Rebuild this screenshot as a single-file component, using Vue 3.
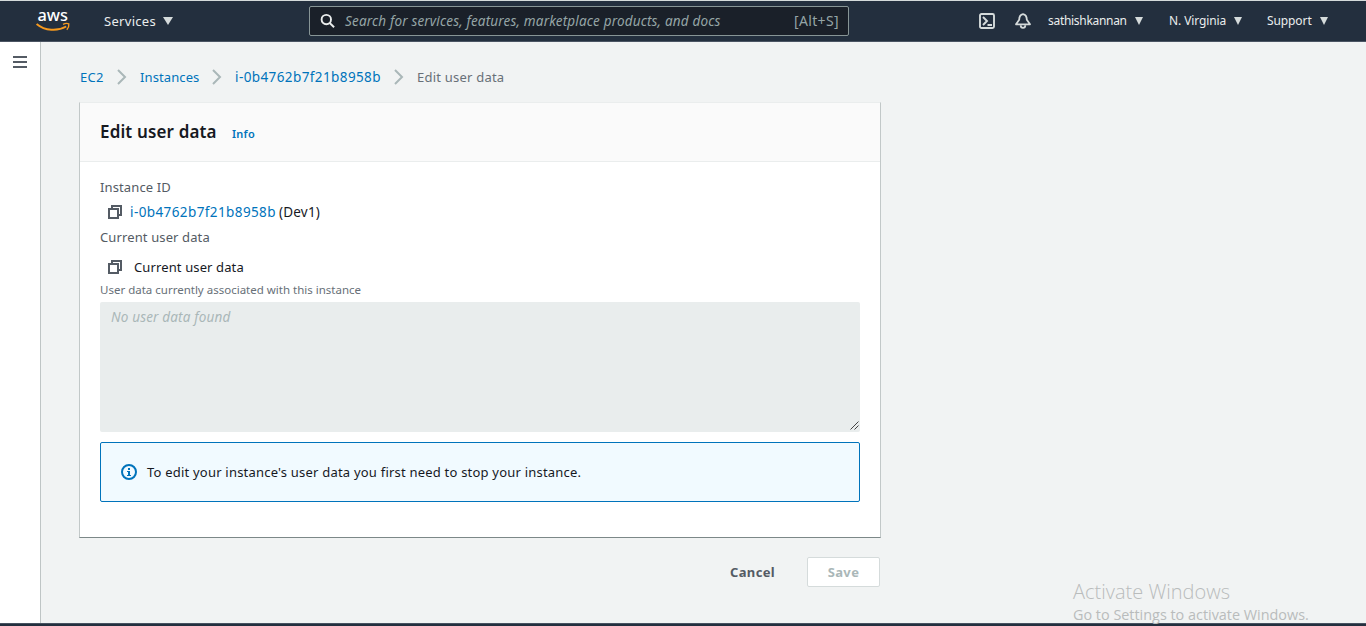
<script setup>
const crumbs = [
  { text: 'EC2', cls: 'c1' },
  { text: 'Instances', cls: 'c2' },
  { text: 'i-0b4762b7f21b8958b', cls: 'c3' },
]
const menus = [
  { text: 'sathishkannan', cls: 'm1' },
  { text: 'N. Virginia', cls: 'm2' },
  { text: 'Support', cls: 'm3' },
]
</script>

<template>
  <div class="page">
    <header class="topbar">
      <svg class="logo" width="34" height="22" viewBox="0 0 34 22">
        <text x="1.5" y="11.3" textLength="30.5" lengthAdjust="spacingAndGlyphs" class="logo-text">aws</text>
        <path d="M0.6 13.9C9 20.9 21.5 21.5 30.2 16.5" fill="none" stroke="#f79a1e" stroke-width="1.9" />
        <path d="M27 14.4c2-1 4.8-1 5.8-.5.3 1.8-.5 4.2-2 5.8" fill="none" stroke="#f79a1e" stroke-width="1.4" />
      </svg>
      <div class="services"><span class="services-text">Services</span><i class="caret"></i></div>
      <div class="search">
        <svg class="mag" width="16" height="16" viewBox="0 0 16 16" fill="none" stroke="#eaeded" stroke-width="1.9">
          <circle cx="6.3" cy="6.6" r="4.7" /><path d="M9.7 10l4.4 4.2" />
        </svg>
        <span class="ph">Search for services, features, marketplace products, and docs</span>
        <span class="key">[Alt+S]</span>
      </div>
      <svg class="shell" width="16" height="16" viewBox="0 0 16 16" fill="none" stroke="#d5dbdb" stroke-width="1.9">
        <rect x="1" y="1" width="14" height="14" rx="1.5" /><path d="M4 4l4 4-4 4M8.5 12H13" />
      </svg>
      <svg class="bell" width="16" height="16" viewBox="0 0 16 16" fill="none" stroke="#d5dbdb" stroke-width="1.8" stroke-linejoin="round">
        <path d="M8 1.2C5 1.8 4.2 4 4.2 6.8L1 11.3h14l-3.2-4.5C11.8 4 11 1.8 8 1.2z" /><path d="M5.7 12.2c0 3.6 4.6 3.6 4.6 0" />
      </svg>
      <div v-for="m in menus" :key="m.text" class="menu" :class="m.cls">
        <span>{{ m.text }}</span><i class="caret small"></i>
      </div>
    </header>

    <div class="body">
      <aside class="rail"><div class="burger"><i></i><i></i><i></i></div></aside>
      <main class="main">
        <nav class="crumbs">
          <template v-for="c in crumbs" :key="c.text">
            <a :class="c.cls"><span>{{ c.text }}</span></a>
            <svg class="chev" width="10" height="16" viewBox="0 0 10 16" fill="none" stroke="#aab7b8" stroke-width="2"><path d="M1 1l7 7-7 7" /></svg>
          </template>
          <span class="here">Edit user data</span>
        </nav>

        <section class="card">
          <div class="card-head"><h2>Edit user data</h2><a class="info">Info</a></div>
          <div class="card-body">
            <div class="label l-id">Instance ID</div>
            <div class="row">
              <svg class="copy" width="14" height="14" viewBox="0 0 14 14" fill="none" stroke="#545b64" stroke-width="2"><path d="M1 4h9v9H1zM4 4V1h9v9h-3" /></svg>
              <a class="iid">i-0b4762b7f21b8958b</a><span class="dev">(Dev1)</span>
            </div>
            <div class="label l-cur">Current user data</div>
            <div class="row second">
              <svg class="copy" width="14" height="14" viewBox="0 0 14 14" fill="none" stroke="#545b64" stroke-width="2"><path d="M1 4h9v9H1zM4 4V1h9v9h-3" /></svg>
              <span class="cur">Current user data</span>
            </div>
            <div class="hint">User data currently associated with this instance</div>
            <div class="area">
              <span>No user data found</span>
              <svg class="grip" width="9" height="9" viewBox="0 0 9 9" stroke="#444" stroke-width="1"><path d="M0.5 8.5l8-8M4.5 8.5l4-4" /></svg>
            </div>
            <div class="alert">
              <svg width="16" height="16" viewBox="0 0 16 16"><circle cx="8" cy="8" r="7" fill="none" stroke="#0073bb" stroke-width="2" /><path d="M7 4h2v2H7zM6 7h3v4h1v1H6v-1h1V8H6z" fill="#0073bb" /></svg>
              <span>To edit your instance's user data you first need to stop your instance.</span>
            </div>
          </div>
        </section>

        <div class="actions">
          <span class="cancel">Cancel</span>
          <button class="save" disabled><span>Save</span></button>
        </div>
      </main>
      <div class="watermark"><div class="w1">Activate Windows</div><div class="w2">Go to Settings to activate Windows.</div></div>
    </div>
    <footer class="foot"></footer>
  </div>
</template>

<style>
body { margin: 0; overflow: hidden; }
</style>

<style scoped>
* { box-sizing: border-box; }
.page { width: 1366px; height: 626px; display: flex; flex-direction: column; background: #f1f3f3; font: 13px/20px "Noto Sans", "Open Sans", sans-serif; color: #16191f; white-space: nowrap; overflow: hidden; }
.topbar { height: 42px; flex: none; display: flex; align-items: center; background: #232f3e; border-top: 1px solid #d5dbdb; border-bottom: 1px solid #4b5563; color: #eaeded; }
.logo { margin-left: 36px; width: 34px; flex: none; overflow: visible; }
.logo-text { font: 500 16px "Noto Sans", sans-serif; fill: #fff; }
.services { margin-left: 34px; width: 205px; display: flex; align-items: center; flex: none; }
.services-text { width: 59px; letter-spacing: 0.3px; }
.caret { width: 0; height: 0; border: 5px solid transparent; border-top: 8px solid #d5dbdb; border-bottom: 0; }
.caret.small { border-width: 8px 4.5px 0; margin-left: auto; }
.search { width: 540px; height: 30px; flex: none; display: flex; align-items: center; background: #1a2029; border: 1px solid #879596; border-radius: 2px; color: #95a5a6; }
.mag { margin-left: 10px; }
.ph { margin-left: 9px; font-style: italic; width: 449px; font-size: 13.5px; letter-spacing: 0.17px; }
.key { font-size: 14px; letter-spacing: 0.35px; }
.shell { margin-left: 130px; flex: none; }
.bell { margin-left: 20px; flex: none; }
.menu { display: flex; align-items: center; font-size: 12px; flex: none; }
.m1 { margin-left: 17px; width: 95px; letter-spacing: -0.3px; }
.m2 { margin-left: 26px; width: 73px; letter-spacing: -0.1px; }
.m3 { margin-left: 25px; width: 61px; letter-spacing: -0.1px; }
.body { flex: 1; display: flex; position: relative; min-height: 0; }
.rail { width: 41px; background: #fff; border-right: 1px solid #bfc5c5; flex: none; }
.burger { display: flex; flex-direction: column; gap: 3px; margin: 14px 0 0 13px; width: 14px; }
.burger i { height: 2px; background: #545b64; }
.main { width: 840px; padding-left: 38px; flex: none; }
.crumbs { height: 20px; margin: 25px 0 0 1px; display: flex; align-items: center; }
a { color: #0073bb; }
.c1 { width: 37px; letter-spacing: 0.3px; }
.c2 { width: 72px; letter-spacing: 0.1px; }
.c3 { width: 159px; font-size: 13.5px; letter-spacing: 0.4px; }
.chev { flex: none; }
.c1 + .chev { margin-right: 13px; }
.c2 + .chev { margin-right: 13px; }
.c3 + .chev { margin-right: 13px; }
.here { color: #687078; letter-spacing: 0.22px; }
.card { width: 802px; height: 436px; margin-top: 15px; background: #fff; border: 1px solid #c2c8c8; border-top-color: #eaeded; border-bottom-color: #7c8888; }
.card-head { height: 59px; background: #fafafa; border-bottom: 1px solid #eaeded; padding-left: 20px; display: flex; align-items: center; }
h2 { font-size: 17px; line-height: 22px; font-weight: 600; margin: 0; width: 132px; letter-spacing: 0.14px; }
.info { font-size: 11px; font-weight: 600; padding-top: 3px; letter-spacing: 0.25px; }
.card-body { padding: 15px 20px 0; }
.label { color: #545b64; letter-spacing: 0.12px; }
.row { display: flex; align-items: center; margin-top: 5px; height: 20px; }
.label.l-cur { margin-top: 5px; }
.row.second { margin-top: 10px; }
.copy { margin-left: 8px; flex: none; }
.iid { margin-left: 8px; width: 149px; font-size: 13.5px; letter-spacing: 0.4px; }
.dev { font-size: 13.5px; letter-spacing: 0.2px; }
.cur { margin-left: 12px; letter-spacing: 0.12px; }
.hint { font-size: 11.5px; line-height: 16px; color: #687078; margin-top: 5px; }
.area { margin-top: 4px; width: 760px; height: 130px; background: #e9eded; border-radius: 2px; color: #aab7b8; font-size: 13.5px; letter-spacing: 0.17px; font-style: italic; padding: 5px 11px; position: relative; }
.grip { position: absolute; right: 1px; bottom: 2px; }
.alert { margin-top: 10px; width: 760px; height: 60px; border: 1px solid #0073bb; border-radius: 2px; background: #f1faff; display: flex; align-items: center; padding-left: 20px; gap: 10px; letter-spacing: 0.21px; }
.actions { width: 801px; margin-top: 19px; height: 30px; display: flex; align-items: center; justify-content: flex-end; font-weight: 700; letter-spacing: 0.35px; }
.cancel { width: 77px; }
.cancel { color: #545b64; }
.save { width: 73px; height: 30px; margin: 0; padding: 0; border: 1px solid #d5dbdb; border-radius: 2px; background: #fff; color: #aab7b8; font: inherit; letter-spacing: 0.35px; }
.watermark { position: absolute; left: 1073px; top: 537px; color: #b9bcbc; font-family: "Open Sans", sans-serif; }
.w1 { font-size: 20px; line-height: 26px; font-weight: 300; }
.w2 { font-size: 14.4px; line-height: 20px; }
.foot { height: 3px; flex: none; background: #232f3e; border-top: 1px solid #475260; }
</style>
